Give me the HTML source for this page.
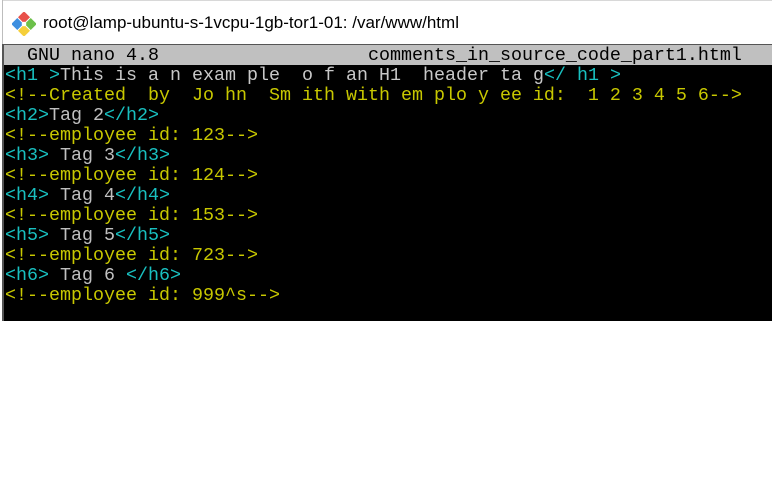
<!DOCTYPE html>
<html><head><style>
html,body{margin:0;padding:0;background:#fff;width:772px;height:494px;overflow:hidden;position:relative}
.tl{position:absolute;left:2px;top:0;width:770px;height:1px;background:#d8d8d8}
.ll{position:absolute;left:2px;top:0;width:1px;height:45px;background:#bdbdbd}
.title{position:absolute;left:43px;top:13px;font:17px "Liberation Sans",sans-serif;color:#000;white-space:pre}
.term{position:absolute;left:2px;top:44px;width:770px;height:277px;background:#000;border-left:2px solid #555;border-top:1px solid #555;box-sizing:border-box}
.hdbg{position:absolute;left:4px;top:45px;width:768px;height:20px;background:#c0c0c0}
.rows{position:absolute;left:5px;top:46px;font:18.33px/20px "Liberation Mono",monospace;white-space:pre;color:#c0c0c0}
.hd{color:#000}
.c{color:#19c0c0}.y{color:#c8c800}.w{color:#c8c8c8}
</style></head><body>
<div class="tl"></div><div class="ll"></div>
<svg style="position:absolute;left:12px;top:12px" width="24" height="24" viewBox="0 0 24 24">
<g transform="rotate(45 12 12)">
<rect x="3" y="3" width="8.5" height="8.5" fill="#e8514a"/>
<rect x="12.5" y="3" width="8.5" height="8.5" fill="#6cc04a"/>
<rect x="3" y="12.5" width="8.5" height="8.5" fill="#3d8fe0"/>
<rect x="12.5" y="12.5" width="8.5" height="8.5" fill="#f5cf3a"/>
</g>
<circle cx="12" cy="12" r="2.3" fill="#fff"/>
</svg>
<div class="title">root@lamp-ubuntu-s-1vcpu-1gb-tor1-01: /var/www/html</div>
<div class="term"></div>
<div class="hdbg"></div>
<div class="rows"><div class="hd">  GNU nano 4.8                   comments_in_source_code_part1.html</div><div><span class="c">&lt;h1 &gt;</span><span class="w">This is a n exam ple  o f an H1  header ta g</span><span class="c">&lt;/ h1 &gt;</span></div><div class="y">&lt;!--Created  by  Jo hn  Sm ith with em plo y ee id:  1 2 3 4 5 6--&gt;</div><div><span class="c">&lt;h2&gt;</span>Tag 2<span class="c">&lt;/h2&gt;</span></div><div class="y">&lt;!--employee id: 123--&gt;</div><div><span class="c">&lt;h3&gt;</span> Tag 3<span class="c">&lt;/h3&gt;</span></div><div class="y">&lt;!--employee id: 124--&gt;</div><div><span class="c">&lt;h4&gt;</span> Tag 4<span class="c">&lt;/h4&gt;</span></div><div class="y">&lt;!--employee id: 153--&gt;</div><div><span class="c">&lt;h5&gt;</span> Tag 5<span class="c">&lt;/h5&gt;</span></div><div class="y">&lt;!--employee id: 723--&gt;</div><div><span class="c">&lt;h6&gt;</span> Tag 6 <span class="c">&lt;/h6&gt;</span></div><div class="y">&lt;!--employee id: 999^s--&gt;</div></div>
</body></html>
